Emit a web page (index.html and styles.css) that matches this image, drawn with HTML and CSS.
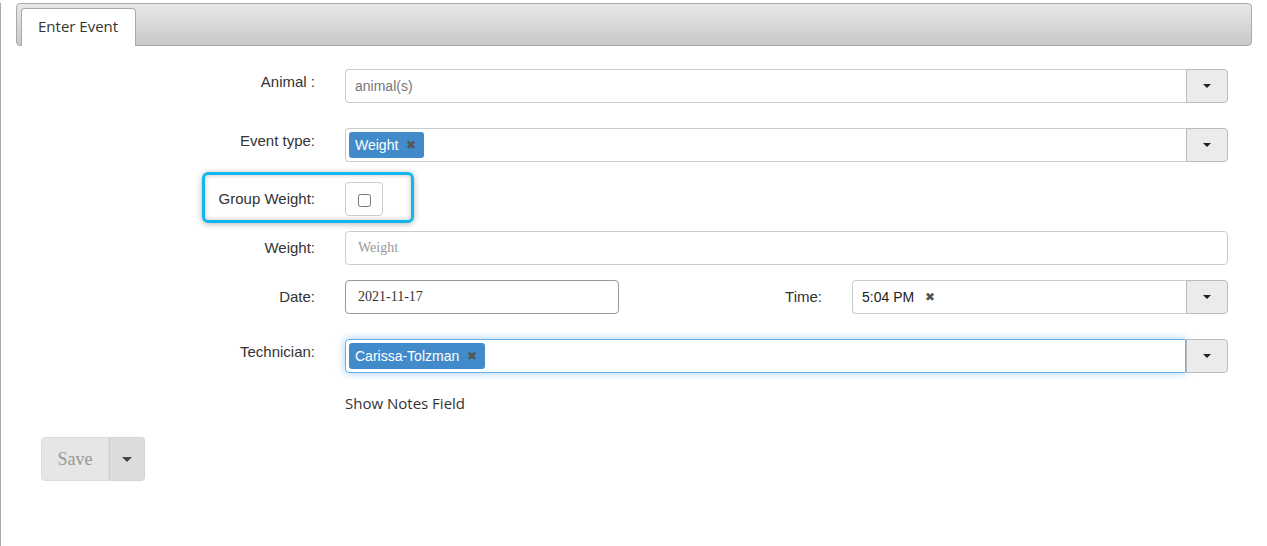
FILE: index.html
```html
<!DOCTYPE html>
<html lang="en">
<head>
    <meta charset="UTF-8">
    <title>Enter Event</title>
    <link rel="stylesheet" href="styles.css">
</head>
<body>
    <div class="page">
        <!-- Barra de abas -->
        <div class="tabs">
            <div class="tab active">Enter Event</div>
        </div>

        <div class="event-form">
            <div class="form-row row-wide">
                <label class="control-label chosen-label">Animal :</label>
                <div class="select-box">
                    <div class="select-field"><span class="placeholder">animal(s)</span></div>
                    <div class="select-btn"><span class="caret"></span></div>
                </div>
            </div>

            <div class="form-row row-event">
                <label class="control-label chosen-label">Event type:</label>
                <div class="select-box">
                    <div class="select-field">
                        <span class="tag">Weight <span class="tag-close">&#x2716;</span></span>
                    </div>
                    <div class="select-btn"><span class="caret"></span></div>
                </div>
            </div>

            <div class="form-row row-group">
                <div class="highlight"></div>
                <label class="control-label">Group Weight:</label>
                <div>
                    <span class="check-box"><input type="checkbox"></span>
                </div>
            </div>

            <div class="form-row">
                <label class="control-label">Weight:</label>
                <input class="text-input" type="text" placeholder="Weight">
            </div>

            <div class="form-row row-wide">
                <label class="control-label">Date:</label>
                <div class="date-time">
                    <input class="text-input date-input" type="text" value="2021-11-17">
                    <label class="control-label time-label">Time:</label>
                    <div class="select-box">
                        <div class="select-field time-field">5:04 PM <span class="time-close">&#x2716;</span></div>
                        <div class="select-btn"><span class="caret"></span></div>
                    </div>
                </div>
            </div>

            <div class="form-row row-tech">
                <label class="control-label chosen-label">Technician:</label>
                <div class="select-box">
                    <div class="select-field focused">
                        <span class="tag">Carissa-Tolzman <span class="tag-close">&#x2716;</span></span>
                    </div>
                    <div class="select-btn"><span class="caret"></span></div>
                </div>
            </div>

            <div class="notes-row">
                <a class="notes-link">Show Notes Field</a>
            </div>

            <div class="save-group">
                <button class="save-button" disabled>Save</button>
                <button class="save-toggle"><span class="caret caret-dark"></span></button>
            </div>
        </div>
    </div>
</body>
</html>
```

FILE: styles.css
```css
* {
  margin: 0;
  padding: 0;
  box-sizing: border-box;
}

body {
  font-family: "Liberation Sans", Arial, sans-serif;
  background-color: #fff;
  color: #333;
}

.page {
  border-left: 1px solid #aaa;
  min-height: 546px;
}

/* Abas */
.tabs {
  margin: 3px 15px 0 15px;
  height: 43px;
  border: 1px solid #aaa;
  border-radius: 4px;
  background: linear-gradient(#e8e8e8, #c8c8c8);
  padding: 4px 0 0 4px;
  display: flex;
  align-items: flex-end;
}

.tab {
  font-family: "Open Sans", sans-serif;
  font-size: 15px;
  color: #333;
  background-color: #fff;
  border: 1px solid #aaa;
  border-bottom: none;
  border-radius: 4px 4px 0 0;
  width: 115px;
  height: 38px;
  margin-bottom: -1px;
  padding: 7px 0 0 16px;
}

/* Formulário */
.event-form {
  padding: 23px 0 0 15px;
}

.form-row {
  position: relative;
  display: grid;
  grid-template-columns: 299px 883px;
  column-gap: 30px;
  margin-bottom: 15px;
}

.row-wide {
  margin-bottom: 25px;
}

.row-event {
  margin-bottom: 20px;
}

.row-tech {
  margin-bottom: 20px;
}

.control-label {
  font-size: 15px;
  line-height: 20px;
  text-align: right;
  padding-top: 7px;
}

.chosen-label {
  padding-top: 3px;
}

.select-box {
  display: flex;
  height: 34px;
}

.select-field {
  flex: 1;
  border: 1px solid #ccc;
  border-right: none;
  border-radius: 4px 0 0 4px;
  padding: 3px;
  display: flex;
  align-items: center;
  font-size: 14px;
}

.select-field.focused {
  border: 1px solid #66afe9;
  box-shadow: 0 0 8px rgba(102, 175, 233, 0.6);
}

.placeholder {
  color: #777;
  padding-left: 6px;
}

.select-btn {
  width: 42px;
  background-color: #ebebeb;
  border: 1px solid #bbb;
  border-radius: 0 4px 4px 0;
  display: flex;
  align-items: center;
  justify-content: center;
}

.caret {
  width: 0;
  height: 0;
  border-left: 4px solid transparent;
  border-right: 4px solid transparent;
  border-top: 4px solid #222;
}

.tag {
  background-color: #428bca;
  color: #fff;
  border-radius: 3px;
  height: 26px;
  line-height: 26px;
  padding: 0 8px 0 6px;
  display: inline-flex;
  align-items: center;
}

.tag-close {
  color: #555;
  font-size: 12px;
  margin-left: 8px;
}

.time-field {
  padding-left: 9px;
  color: #222;
}

.time-close {
  color: #555;
  font-size: 12px;
  margin-left: 11px;
}

/* Destaque em volta do Group Weight */
.highlight {
  position: absolute;
  left: 186px;
  top: -10px;
  width: 212px;
  height: 51px;
  border: 3px solid #13b5ea;
  border-radius: 6px;
  box-shadow: 0 1px 6px rgba(0, 0, 0, 0.3), inset 0 0 5px rgba(0, 0, 0, 0.25);
}

.check-box {
  width: 38px;
  height: 34px;
  border: 1px solid #ccc;
  border-radius: 4px;
  display: inline-flex;
  align-items: center;
  justify-content: center;
  padding-top: 2px;
}

.check-box input {
  width: 13px;
  height: 13px;
  margin: 0;
}

.text-input {
  height: 34px;
  border: 1px solid #ccc;
  border-radius: 4px;
  padding: 0 12px;
  font-family: "Liberation Serif", serif;
  font-size: 14px;
  color: #333;
  width: 100%;
}

.text-input::placeholder {
  color: #999;
}

.date-time {
  display: flex;
}

.date-input {
  width: 274px;
  flex: none;
  border-color: #999;
}

.time-label {
  width: 203px;
  flex: none;
  margin-right: 30px;
}

.date-time .select-box {
  flex: 1;
}

.notes-row {
  padding-left: 329px;
  margin-bottom: 24px;
}

.notes-link {
  font-family: "Open Sans", sans-serif;
  font-size: 15px;
  line-height: 20px;
  color: #333;
}

/* Botão salvar */
.save-group {
  display: flex;
  margin-left: 25px;
  height: 44px;
}

.save-button {
  width: 68px;
  font-family: "Liberation Serif", serif;
  font-size: 18px;
  color: #999;
  background-color: #e6e6e6;
  border: 1px solid #ddd;
  border-radius: 4px 0 0 4px;
}

.save-toggle {
  width: 36px;
  background-color: #dcdcdc;
  border: 1px solid #d4d4d4;
  border-left: 1px solid #ccc;
  border-radius: 0 4px 4px 0;
  display: flex;
  align-items: center;
  justify-content: center;
}

.caret-dark {
  border-left-width: 5px;
  border-right-width: 5px;
  border-top: 5px solid #444;
}
```
